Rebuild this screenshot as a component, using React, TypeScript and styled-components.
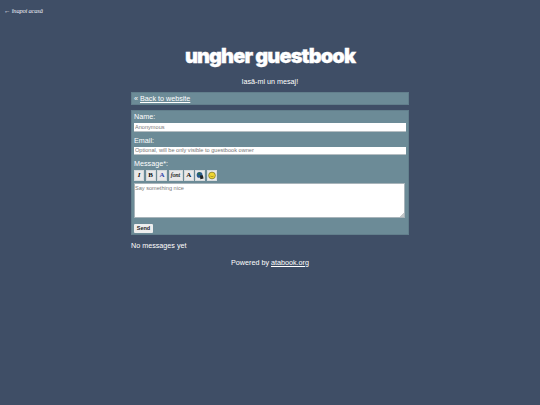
import React from "react";
import styled, { createGlobalStyle } from "styled-components";

const Global = createGlobalStyle`
  html, body { margin: 0; padding: 0; background: #3f4e66; }
  body { font-family: "Liberation Sans", Arial, sans-serif; color: #fff; font-size: 7.2px; }
  a { color: #fff; }
`;
const Page = styled.div`
  width: 540px; height: 405px; overflow: hidden; display: flex; flex-direction: column; align-items: center;
`;
const TopBar = styled.div`
  align-self: stretch; height: 43px; padding: 7px 0 0 4px; box-sizing: border-box;
`;
const HomeLink = styled.a`
  font-family: "Liberation Serif", serif; font-style: italic; font-size: 6.5px; line-height: 8px; letter-spacing: -0.2px; color: #e8ecf2; text-decoration: none; display: block;
`;
const Title = styled.h1`
  margin: 0; font-family: Inter, sans-serif; font-weight: 900; font-size: 20px; line-height: 27px; letter-spacing: -0.9px; -webkit-text-stroke: 0.3px #fff; color: #fff; height: 30px;
`;
const Subtitle = styled.div`
  margin-top: 4px; line-height: 10px; height: 15px; font-size: 7.2px; text-align: center;
`;
const Column = styled.div`
  width: 278px; display: flex; flex-direction: column;
`;
const BackBar = styled.div`
  height: 13px; background: #6c8b97; border: 1px solid #627f8c; box-sizing: border-box; padding-left: 2px; line-height: 11px; font-size: 7.2px;
`;
const Form = styled.form`
  margin-top: 5px; height: 125px; box-sizing: border-box; background: #6c8b97; border: 1px solid #627f8c; padding: 1px 2px; display: flex; flex-direction: column;
`;
const Label = styled.label`
  display: block; font-size: 7.2px; line-height: 9px; height: 11px;
`;
const Field = styled.input`
  display: block; box-sizing: border-box; width: 272px; height: 8.5px; margin: 0 0 4px; padding: 0 1px; border: 0; border-bottom: 1px solid #b5bec2; background: #fff; font: 5.6px/7px "Liberation Sans", sans-serif; outline: 0;
  &::placeholder { color: #777; opacity: 1; }
`;
const Toolbar = styled.div`
  display: flex; gap: 1.5px; height: 11px; margin: 0 0 2px;
`;
const Tool = styled.button<{ $w?: number; $color?: string }>`
  flex: none; box-sizing: border-box; width: ${p => p.$w ?? 10}px; height: 11px; padding: 0; border: 1px solid #d5dadc; background: #e9e9e9; color: ${p => p.$color ?? "#111"}; font: bold 7px/9px "Liberation Serif", serif; display: flex; align-items: center; justify-content: center;
`;
const FontGlyph = styled.i`
  font-size: 6px; font-weight: 400; -webkit-text-stroke: 0.15px #111;
`;
const Area = styled.textarea`
  display: block; box-sizing: border-box; width: 271px; height: 34.5px; margin: 0; padding: 1px 0; border: 1px solid #a8b4ba; background: #fff; font: 5.6px/7px "Liberation Sans", sans-serif; resize: vertical; outline: 0;
  &::placeholder { color: #777; opacity: 1; }
  &::-webkit-resizer { background: linear-gradient(135deg, transparent 50%, #c4c8ca 50%) right bottom / 4px 4px no-repeat; }
`;
const Send = styled.button`
  margin-top: 6px; align-self: flex-start; width: 19px; height: 9px; padding: 0; border: 0; border-radius: 1px; background: #eee; color: #222; font: bold 5.5px/9px "Liberation Sans", sans-serif;
`;
const Empty = styled.div`
  margin-top: 5.5px; font-size: 7.2px; line-height: 10px;
`;
const Footer = styled.div`
  margin-top: 7px; font-size: 7.2px; line-height: 10px; text-align: center;
`;

export default function App() {
  return (
    <Page>
      <Global />
      <TopBar><HomeLink href="#">← înapoi acasă</HomeLink></TopBar>
      <Title>ungher guestbook</Title>
      <Subtitle>lasă-mi un mesaj!</Subtitle>
      <Column>
        <BackBar>« <a href="#">Back to website</a></BackBar>
        <Form>
          <Label>Name:</Label>
          <Field placeholder="Anonymous" />
          <Label>Email:</Label>
          <Field placeholder="Optional, will be only visible to guestbook owner" />
          <Label>Message*:</Label>
          <Toolbar>
            <Tool type="button"><i>I</i></Tool>
            <Tool type="button">B</Tool>
            <Tool type="button" $color="#34a">A</Tool>
            <Tool type="button" $w={14}><FontGlyph>font</FontGlyph></Tool>
            <Tool type="button" $w={9.5}>A</Tool>
            <Tool type="button">
              <svg width="9" height="9" viewBox="0 0 9 9"><circle cx="4" cy="3.8" r="3.3" fill="#2a5c8f" /><path d="M2 1.6l2.2-.4 1 1.6-1.6 1.4-1.4-1z" fill="#2f6b46" /><path d="M4.5 4.6l3.2-.4.8 3.8-3.6.6z" fill="#222" /></svg>
            </Tool>
            <Tool type="button">
              <svg width="9" height="9" viewBox="0 0 9 9"><circle cx="4.5" cy="4.5" r="3.8" fill="#f0d630" stroke="#77702a" strokeWidth=".8" /><path d="M2.7 5.2q1.8 1.3 3.6 0" stroke="#8a7a20" strokeWidth=".7" fill="none" /></svg>
            </Tool>
          </Toolbar>
          <Area placeholder="Say something nice" />
          <Send type="button">Send</Send>
        </Form>
        <Empty>No messages yet</Empty>
      </Column>
      <Footer>Powered by <a href="#">atabook.org</a></Footer>
    </Page>
  );
}
